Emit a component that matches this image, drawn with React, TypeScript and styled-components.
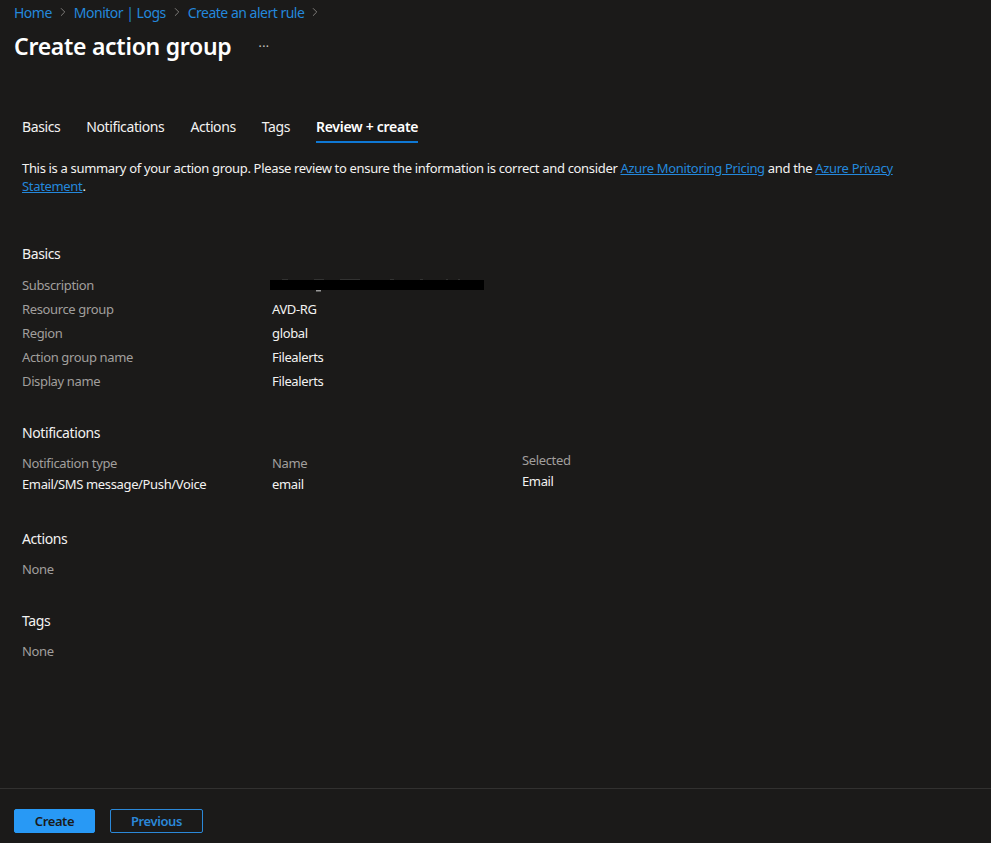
import styled, { createGlobalStyle } from 'styled-components';
import { ChevronRight } from 'lucide-react';

const Global = createGlobalStyle`
  html, body { margin: 0; padding: 0; background: #1b1a19; }
  body { font-family: "Noto Sans", "Open Sans", "Liberation Sans", sans-serif; }
  * { box-sizing: border-box; }
`;

const Page = styled.div`
  width: 991px;
  height: 843px;
  display: flex;
  flex-direction: column;
  background: #1b1a19;
  color: #ffffff;
  overflow: hidden;
`;

const Main = styled.main`
  flex: 1;
  min-height: 0;
`;

const Crumbs = styled.nav`
  display: flex;
  align-items: center;
  height: 24px;
  padding-left: 14px;
  font-size: 14px;
  letter-spacing: -0.5px;
`;

const Crumb = styled.a`
  color: #2488dc;
`;

const CrumbSep = styled(ChevronRight)`
  width: 14px;
  height: 14px;
  margin: 0 4px;
  color: #8a8886;
  stroke-width: 1.5;
`;

const TitleRow = styled.div`
  display: flex;
  align-items: center;
  height: 42px;
  margin-top: 1px;
  padding-left: 14px;
`;

const Title = styled.h1`
  margin: 0;
  font-size: 23px;
  font-weight: 600;
  letter-spacing: -0.28px;
  color: #ffffff;
`;

const More = styled.span`
  margin-left: 27px;
  font-size: 12px;
  letter-spacing: 0.5px;
  color: #c8c6c4;
`;

const Tabs = styled.div`
  display: flex;
  gap: 26px;
  height: 33px;
  margin: 43px 0 0 22px;
`;

const Tab = styled.div<{ $active?: boolean }>`
  height: 33px;
  padding-top: 7px;
  line-height: 20px;
  font-size: 14px;
  letter-spacing: ${({ $active }) => ($active ? '-0.28px' : '-0.4px')};
  font-weight: ${({ $active }) => ($active ? 600 : 400)};
  color: ${({ $active }) => ($active ? '#ffffff' : '#f3f2f1')};
  border-bottom: 2px solid ${({ $active }) => ($active ? '#0f78d4' : 'transparent')};
`;

const Intro = styled.p`
  width: 900px;
  margin: 16px 0 0 22px;
  font-size: 13px;
  line-height: 18px;
  letter-spacing: -0.33px;
  color: #f3f2f1;
`;

const DocLink = styled.a`
  color: #2488dc;
  text-decoration: underline;
`;

const Section = styled.section<{ $top: number }>`
  margin: ${({ $top }) => $top}px 0 0 22px;
`;

const Heading = styled.h2`
  margin: 0;
  height: 20px;
  line-height: 20px;
  font-size: 14px;
  font-weight: 400;
  letter-spacing: -0.4px;
  color: #f3f2f1;
`;

const Rows = styled.div`
  margin-top: 9px;
`;

const Row = styled.div`
  display: grid;
  grid-template-columns: 250px 1fr;
  height: 24px;
  line-height: 24px;
  font-size: 13px;
  letter-spacing: -0.36px;
`;

const Label = styled.div`
  color: #a19f9d;
`;

const Value = styled.div`
  color: #f3f2f1;
`;

const Redacted = styled.svg`
  display: block;
  width: 216px;
  height: 16px;
  margin: 5px 0 0 -2px;
`;

const NoteTable = styled.div`
  display: grid;
  grid-template-columns: 250px 250px 1fr;
  margin-top: 10px;
  font-size: 13px;
  letter-spacing: -0.36px;
`;

const NoteColumn = styled.div`
  display: flex;
  flex-direction: column;
  line-height: 21px;
`;

const NoteColumnRaised = styled(NoteColumn)`
  margin-top: -3px;
`;

const NoneText = styled.div`
  margin-top: 8px;
  height: 24px;
  line-height: 24px;
  font-size: 13px;
  letter-spacing: -0.36px;
  color: #a19f9d;
`;

const Footer = styled.footer`
  height: 55px;
  display: flex;
  align-items: flex-start;
  gap: 15px;
  padding: 20px 0 0 14px;
  border-top: 1px solid #323130;
`;

const Button = styled.button<{ $primary?: boolean }>`
  height: 24px;
  padding: 0;
  width: ${({ $primary }) => ($primary ? '81px' : '93px')};
  border-radius: 2px;
  border: 1px solid ${({ $primary }) => ($primary ? '#2899f5' : '#2b88d8')};
  background: ${({ $primary }) => ($primary ? '#2899f5' : 'transparent')};
  color: ${({ $primary }) => ($primary ? '#1b1a19' : '#2b88d8')};
  font-family: inherit;
  font-size: 13px;
  font-weight: 600;
  letter-spacing: -0.4px;
`;

const BASICS = [
  ['Resource group', 'AVD-RG'],
  ['Region', 'global'],
  ['Action group name', 'Filealerts'],
  ['Display name', 'Filealerts'],
];

export default function App() {
  return (
    <Page>
      <Global />
      <Main>
        <Crumbs>
          <Crumb>Home</Crumb>
          <CrumbSep />
          <Crumb>Monitor | Logs</Crumb>
          <CrumbSep />
          <Crumb>Create an alert rule</Crumb>
          <CrumbSep />
        </Crumbs>
        <TitleRow>
          <Title>Create action group</Title>
          <More>···</More>
        </TitleRow>
        <Tabs>
          <Tab>Basics</Tab>
          <Tab>Notifications</Tab>
          <Tab>Actions</Tab>
          <Tab>Tags</Tab>
          <Tab $active>Review + create</Tab>
        </Tabs>
        <Intro>
          This is a summary of your action group. Please review to ensure the information is correct and
          consider <DocLink>Azure Monitoring Pricing</DocLink> and the <DocLink>Azure Privacy</DocLink>
          <br />
          <DocLink>Statement</DocLink>.
        </Intro>

        <Section $top={49}>
          <Heading>Basics</Heading>
          <Rows>
            <Row>
              <Label>Subscription</Label>
              <Value>
                <Redacted viewBox="0 0 216 16" aria-hidden>
                  <path d="M12 2h6M44 2h10M70 2h20M120 2h4M150 2h3M176 2h2M188 2h2" stroke="#4a4a4a" strokeWidth="1" />
                  <rect x="0" y="2" width="214" height="10" fill="#000" />
                  <path d="M46 12h5v1.5h-5z" fill="#999" />
                </Redacted>
              </Value>
            </Row>
            {BASICS.map(([label, value]) => (
              <Row key={label}>
                <Label>{label}</Label>
                <Value>{value}</Value>
              </Row>
            ))}
          </Rows>
        </Section>

        <Section $top={30}>
          <Heading>Notifications</Heading>
          <NoteTable>
            <NoteColumn>
              <Label>Notification type</Label>
              <Value>Email/SMS message/Push/Voice</Value>
            </NoteColumn>
            <NoteColumn>
              <Label>Name</Label>
              <Value>email</Value>
            </NoteColumn>
            <NoteColumnRaised>
              <Label>Selected</Label>
              <Value>Email</Value>
            </NoteColumnRaised>
          </NoteTable>
        </Section>

        <Section $top={34}>
          <Heading>Actions</Heading>
          <NoneText>None</NoneText>
        </Section>

        <Section $top={30}>
          <Heading>Tags</Heading>
          <NoneText>None</NoneText>
        </Section>
      </Main>
      <Footer>
        <Button $primary>Create</Button>
        <Button>Previous</Button>
      </Footer>
    </Page>
  );
}
